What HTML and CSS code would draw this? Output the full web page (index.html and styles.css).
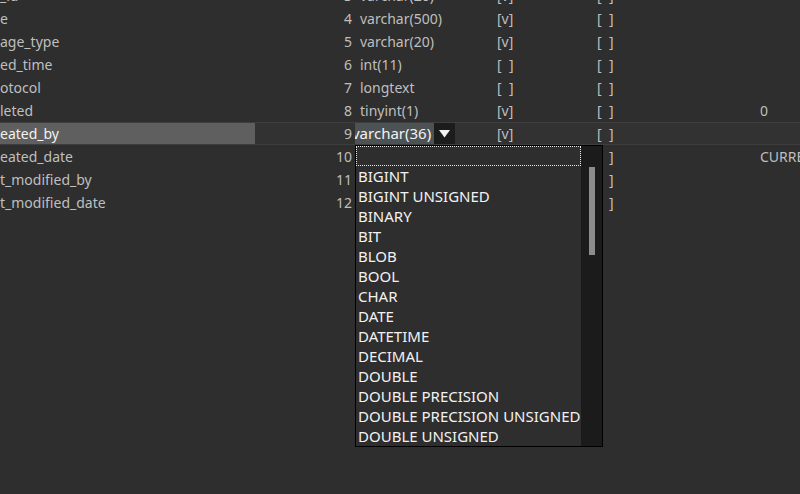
FILE: index.html
```html
<!DOCTYPE html>
<html>
<head>
<meta charset="utf-8">
<link rel="stylesheet" href="styles.css">
</head>
<body>
<div class="grid">
  <div class="row"><div class="c-name">_id</div><div class="c-num">3</div><div class="c-type">varchar(20)</div><div class="c-nn">[v]</div><div class="c-pk">[  ]</div><div class="c-def"></div></div>
  <div class="row"><div class="c-name">e</div><div class="c-num">4</div><div class="c-type">varchar(500)</div><div class="c-nn">[v]</div><div class="c-pk">[  ]</div><div class="c-def"></div></div>
  <div class="row"><div class="c-name">age_type</div><div class="c-num">5</div><div class="c-type">varchar(20)</div><div class="c-nn">[v]</div><div class="c-pk">[  ]</div><div class="c-def"></div></div>
  <div class="row"><div class="c-name">ed_time</div><div class="c-num">6</div><div class="c-type">int(11)</div><div class="c-nn">[  ]</div><div class="c-pk">[  ]</div><div class="c-def"></div></div>
  <div class="row"><div class="c-name">otocol</div><div class="c-num">7</div><div class="c-type">longtext</div><div class="c-nn">[  ]</div><div class="c-pk">[  ]</div><div class="c-def"></div></div>
  <div class="row"><div class="c-name">leted</div><div class="c-num">8</div><div class="c-type">tinyint(1)</div><div class="c-nn">[v]</div><div class="c-pk">[  ]</div><div class="c-def">0</div></div>
  <div class="row row-sel"><div class="c-name"><span class="name-hl">eated_by</span></div><div class="c-num">9</div><div class="c-type"><div class="combo"><span class="combo-text">varchar(36)</span><span class="combo-btn"><svg width="11" height="8" viewBox="0 0 11 8"><path d="M0 0 H11 L5.5 7.5 Z" fill="#f2f2f2"/></svg></span></div></div><div class="c-nn">[v]</div><div class="c-pk">[  ]</div><div class="c-def"></div></div>
  <div class="row"><div class="c-name">eated_date</div><div class="c-num">10</div><div class="c-type"></div><div class="c-nn"></div><div class="c-pk c-pk-cut">]</div><div class="c-def">CURRENT_TIMESTAMP</div></div>
  <div class="row"><div class="c-name">t_modified_by</div><div class="c-num">11</div><div class="c-type"></div><div class="c-nn"></div><div class="c-pk c-pk-cut">]</div><div class="c-def"></div></div>
  <div class="row"><div class="c-name">t_modified_date</div><div class="c-num">12</div><div class="c-type"></div><div class="c-nn"></div><div class="c-pk c-pk-cut">]</div><div class="c-def"></div></div>
</div>

<div class="dropdown">
  <div class="dd-list">
    <div class="dd-search"></div>
    <div class="dd-item">BIGINT</div>
    <div class="dd-item">BIGINT UNSIGNED</div>
    <div class="dd-item">BINARY</div>
    <div class="dd-item">BIT</div>
    <div class="dd-item">BLOB</div>
    <div class="dd-item">BOOL</div>
    <div class="dd-item">CHAR</div>
    <div class="dd-item">DATE</div>
    <div class="dd-item">DATETIME</div>
    <div class="dd-item">DECIMAL</div>
    <div class="dd-item">DOUBLE</div>
    <div class="dd-item">DOUBLE PRECISION</div>
    <div class="dd-item">DOUBLE PRECISION UNSIGNED</div>
    <div class="dd-item">DOUBLE UNSIGNED</div>
  </div>
  <div class="dd-scroll"><div class="dd-thumb"></div></div>
</div>
</body>
</html>
```

FILE: styles.css
```css
html, body {
  margin: 0;
  padding: 0;
  background: #2e2e2e;
  overflow: hidden;
  width: 800px;
  height: 494px;
}
body {
  font-family: "Noto Sans", "Open Sans", sans-serif;
  font-size: 14px;
  color: #bfbfbf;
  position: relative;
}
.grid {
  margin-top: -16px;
}
.row {
  display: grid;
  grid-template-columns: 255px 100px 142px 100px 163px 1fr;
  height: 23px;
  line-height: 23px;
  white-space: pre;
}
.row > div {
  overflow: hidden;
}
.c-num {
  text-align: right;
  padding-right: 3px;
}
.c-type {
  padding-left: 5px;
}
.c-pk-cut {
  padding-left: 12px;
}
.row-sel {
  background: #323232;
  box-shadow: inset 0 1px #3e3e3e, inset 0 -1px #3e3e3e;
}
.row-sel .c-name {
  padding: 1px 0;
}
.name-hl {
  display: block;
  height: 21px;
  line-height: 21px;
  background: #5f5f5f;
  color: #f2f2f2;
}
.row-sel .c-type {
  padding: 1px 0;
}
.combo {
  display: flex;
  width: 100px;
  height: 21px;
  line-height: 21px;
}
.combo-text {
  width: 79px;
  background: #4d5255;
  color: #f2f2f2;
  font-size: 15px;
  text-indent: -3px;
  overflow: hidden;
}
.combo-btn {
  width: 21px;
  background: #1c1c1c;
  display: flex;
  align-items: center;
  justify-content: center;
}
.dropdown {
  position: absolute;
  left: 355px;
  top: 145px;
  width: 246px;
  height: 300px;
  border: 1px solid #000;
  display: flex;
  background: #2e2e2e;
}
.dd-list {
  width: 225px;
  display: flex;
  flex-direction: column;
}
.dd-search {
  height: 18px;
  border: 1px dotted #e8e8e8;
  flex: none;
}
.dd-item {
  height: 20px;
  line-height: 20px;
  padding-left: 2px;
  font-size: 15px;
  color: #f2f2f2;
  white-space: nowrap;
  flex: none;
}
.dd-scroll {
  flex: 1;
  background: #1b1b1b;
  padding: 21px 0 0 8px;
}
.dd-thumb {
  width: 6px;
  height: 88px;
  background: #8c8c8c;
}
```
